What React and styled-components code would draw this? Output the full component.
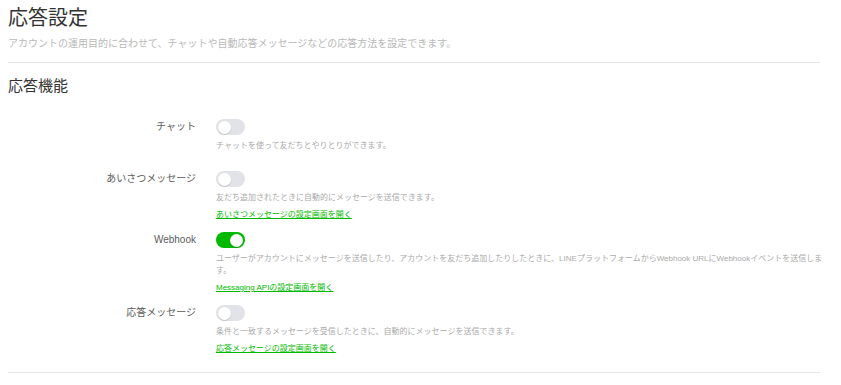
import React, { useState } from "react"
import styled, { createGlobalStyle } from "styled-components"

const GlobalStyle = createGlobalStyle`
  body {
    margin: 0;
    background: #fff;
    font-family: "Liberation Sans", "Noto Sans CJK JP", sans-serif;
  }
`

const Page = styled.div`
  width: 812px;
  padding: 0 0 0 8px;
`
const Title = styled.h1`
  margin: 6px 0 0;
  font-size: 20px;
  line-height: 24px;
  font-weight: 400;
  color: #333;
`
const Lead = styled.p`
  margin: 7px 0 0;
  font-size: 10px;
  line-height: 14px;
  color: #b8b8b8;
`
const Divider = styled.hr`
  margin: ${p => p.$top}px 0 0;
  border: 0;
  border-top: 1px solid #e6e6e6;
`
const SectionTitle = styled.h2`
  margin: 13px 0 0;
  font-size: 15px;
  line-height: 20px;
  font-weight: 400;
  color: #333;
`
const Fields = styled.div`
  margin-top: 23px;
`
const Field = styled.div`
  display: grid;
  grid-template-columns: 188px 1fr;
  column-gap: 20px;
  padding-bottom: ${p => (p.$hasLink ? 11 : 19)}px;
`
const Label = styled.div`
  text-align: right;
  font-size: 10px;
  line-height: 16px;
  color: #5c5c5c;
`
const Body = styled.div`
  display: flex;
  flex-direction: column;
  align-items: flex-start;
`
const Switch = styled.button`
  position: relative;
  width: 29px;
  height: 16px;
  padding: 0;
  border: 0;
  border-radius: 8px;
  background: ${p => (p.$on ? "#00b900" : "#e1e3e8")};
  cursor: pointer;

  &::after {
    content: "";
    position: absolute;
    top: 1.5px;
    left: ${p => (p.$on ? "14px" : "1.5px")};
    width: 13px;
    height: 13px;
    border-radius: 50%;
    background: #fff;
    box-shadow: 0 1px 1px rgba(0, 0, 0, 0.15);
  }
`
const Desc = styled.p`
  margin: 5px -10px 0 0;
  font-size: 8px;
  line-height: 12px;
  color: #aaa;
`
const Link = styled.a`
  margin-top: 5px;
  font-size: 8px;
  line-height: 12px;
  color: #00b900;
  text-decoration: underline;
  text-decoration-color: #00b900;
`

const items = [
  {
    key: "chat",
    label: "チャット",
    on: false,
    desc: "チャットを使って友だちとやりとりができます。",
  },
  {
    key: "greeting",
    label: "あいさつメッセージ",
    on: false,
    desc: "友だち追加されたときに自動的にメッセージを送信できます。",
    link: "あいさつメッセージの設定画面を開く",
  },
  {
    key: "webhook",
    label: "Webhook",
    on: true,
    desc: "ユーザーがアカウントにメッセージを送信したり、アカウントを友だち追加したりしたときに、LINEプラットフォームからWebhook URLにWebhookイベントを送信します。",
    link: "Messaging APIの設定画面を開く",
  },
  {
    key: "auto",
    label: "応答メッセージ",
    on: false,
    desc: "条件と一致するメッセージを受信したときに、自動的にメッセージを送信できます。",
    link: "応答メッセージの設定画面を開く",
  },
]

const App = () => {
  const [state, setState] = useState(
    Object.fromEntries(items.map(i => [i.key, i.on]))
  )

  return (
    <Page>
      <GlobalStyle />
      <Title>応答設定</Title>
      <Lead>
        アカウントの運用目的に合わせて、チャットや自動応答メッセージなどの応答方法を設定できます。
      </Lead>
      <Divider $top={11} />
      <SectionTitle>応答機能</SectionTitle>
      <Fields>
        {items.map(item => (
          <Field key={item.key} $hasLink={!!item.link}>
            <Label>{item.label}</Label>
            <Body>
              <Switch
                role="switch"
                aria-checked={state[item.key]}
                $on={state[item.key]}
                onClick={() =>
                  setState(s => ({ ...s, [item.key]: !s[item.key] }))
                }
              />
              <Desc>{item.desc}</Desc>
              {item.link && <Link href="#">{item.link}</Link>}
            </Body>
          </Field>
        ))}
      </Fields>
      <Divider $top={6} />
    </Page>
  )
}

export default App
